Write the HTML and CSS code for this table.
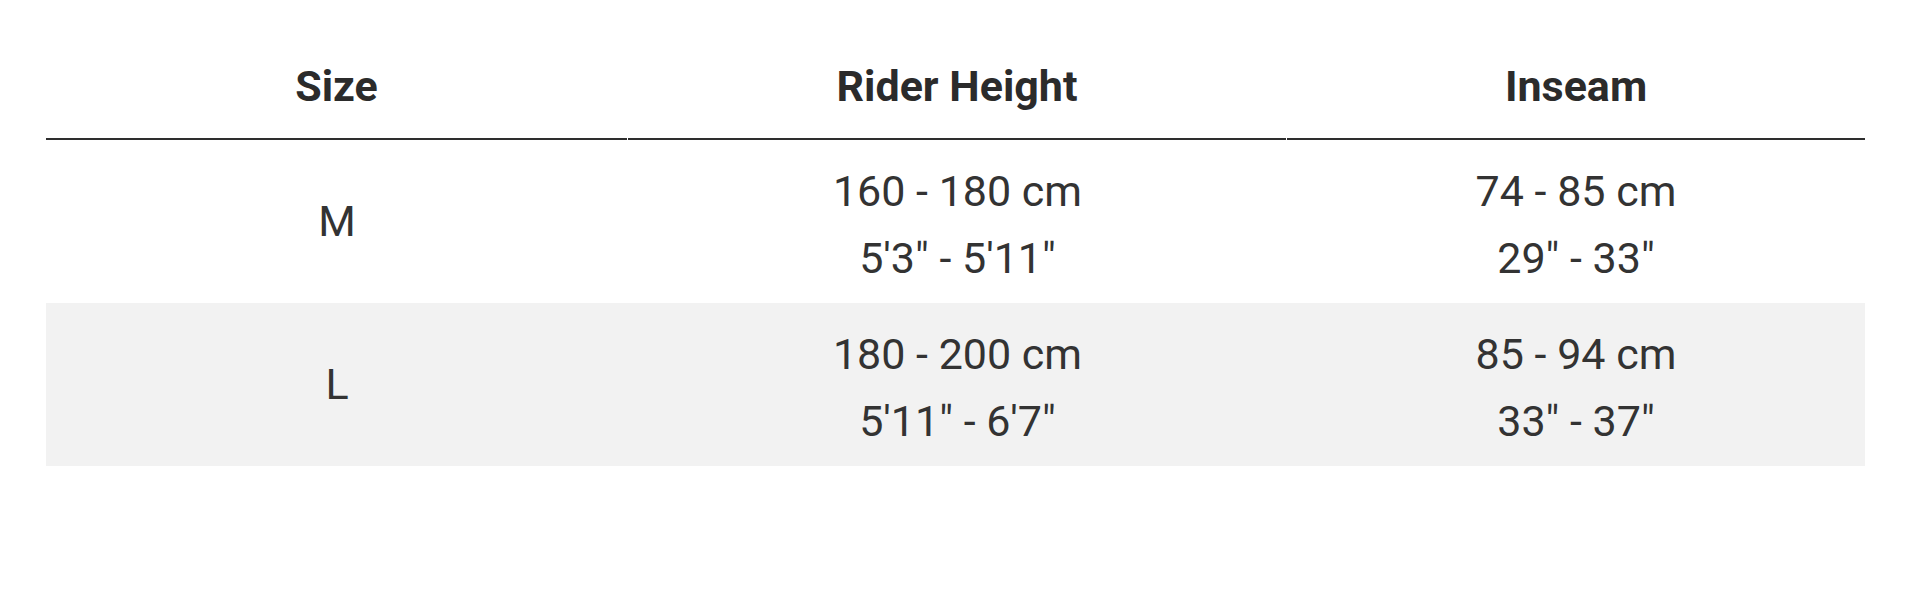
FILE: index.html
```html
<!DOCTYPE html>
<html lang="en">
<head>
<meta charset="utf-8">
<title>Size Guide</title>
<link rel="stylesheet" href="styles.css">
</head>
<body>
<div class="page">
  <div class="size-table">
    <div class="head-row">
      <div class="head-cell">Size</div>
      <div class="head-cell">Rider Height</div>
      <div class="head-cell">Inseam</div>
    </div>
    <div class="body-row">
      <div class="cell">M</div>
      <div class="cell multi"><span>160 - 180 cm</span><span>5'3" - 5'11"</span></div>
      <div class="cell multi"><span>74 - 85 cm</span><span>29" - 33"</span></div>
    </div>
    <div class="body-row alt">
      <div class="cell">L</div>
      <div class="cell multi"><span>180 - 200 cm</span><span>5'11" - 6'7"</span></div>
      <div class="cell multi"><span>85 - 94 cm</span><span>33" - 37"</span></div>
    </div>
  </div>
</div>
</body>
</html>
```
FILE: styles.css
```css
html, body {
  margin: 0;
  padding: 0;
  background: #ffffff;
}
body {
  font-family: Roboto, "Noto Sans", "Liberation Sans", sans-serif;
  color: #333333;
}
.page {
  padding: 0 55px 0 46px;
}
.size-table {
  width: 1819px;
}
.head-row {
  display: grid;
  grid-template-columns: 581px 658px 578px;
  column-gap: 1px;
}
.head-cell {
  font-size: 43px;
  font-weight: 700;
  line-height: 67px;
  color: #2b2b2b;
  text-align: center;
  padding: 53px 0 18px;
  border-bottom: 2px solid #2e2e2e;
}
.body-row {
  display: grid;
  grid-template-columns: 582px 659px 578px;
  align-items: center;
}
.body-row.alt {
  background: #f2f2f2;
}
.cell {
  font-size: 43px;
  line-height: 67px;
  text-align: center;
}
.cell.multi {
  display: flex;
  flex-direction: column;
  padding: 18px 0 11px;
}
```
